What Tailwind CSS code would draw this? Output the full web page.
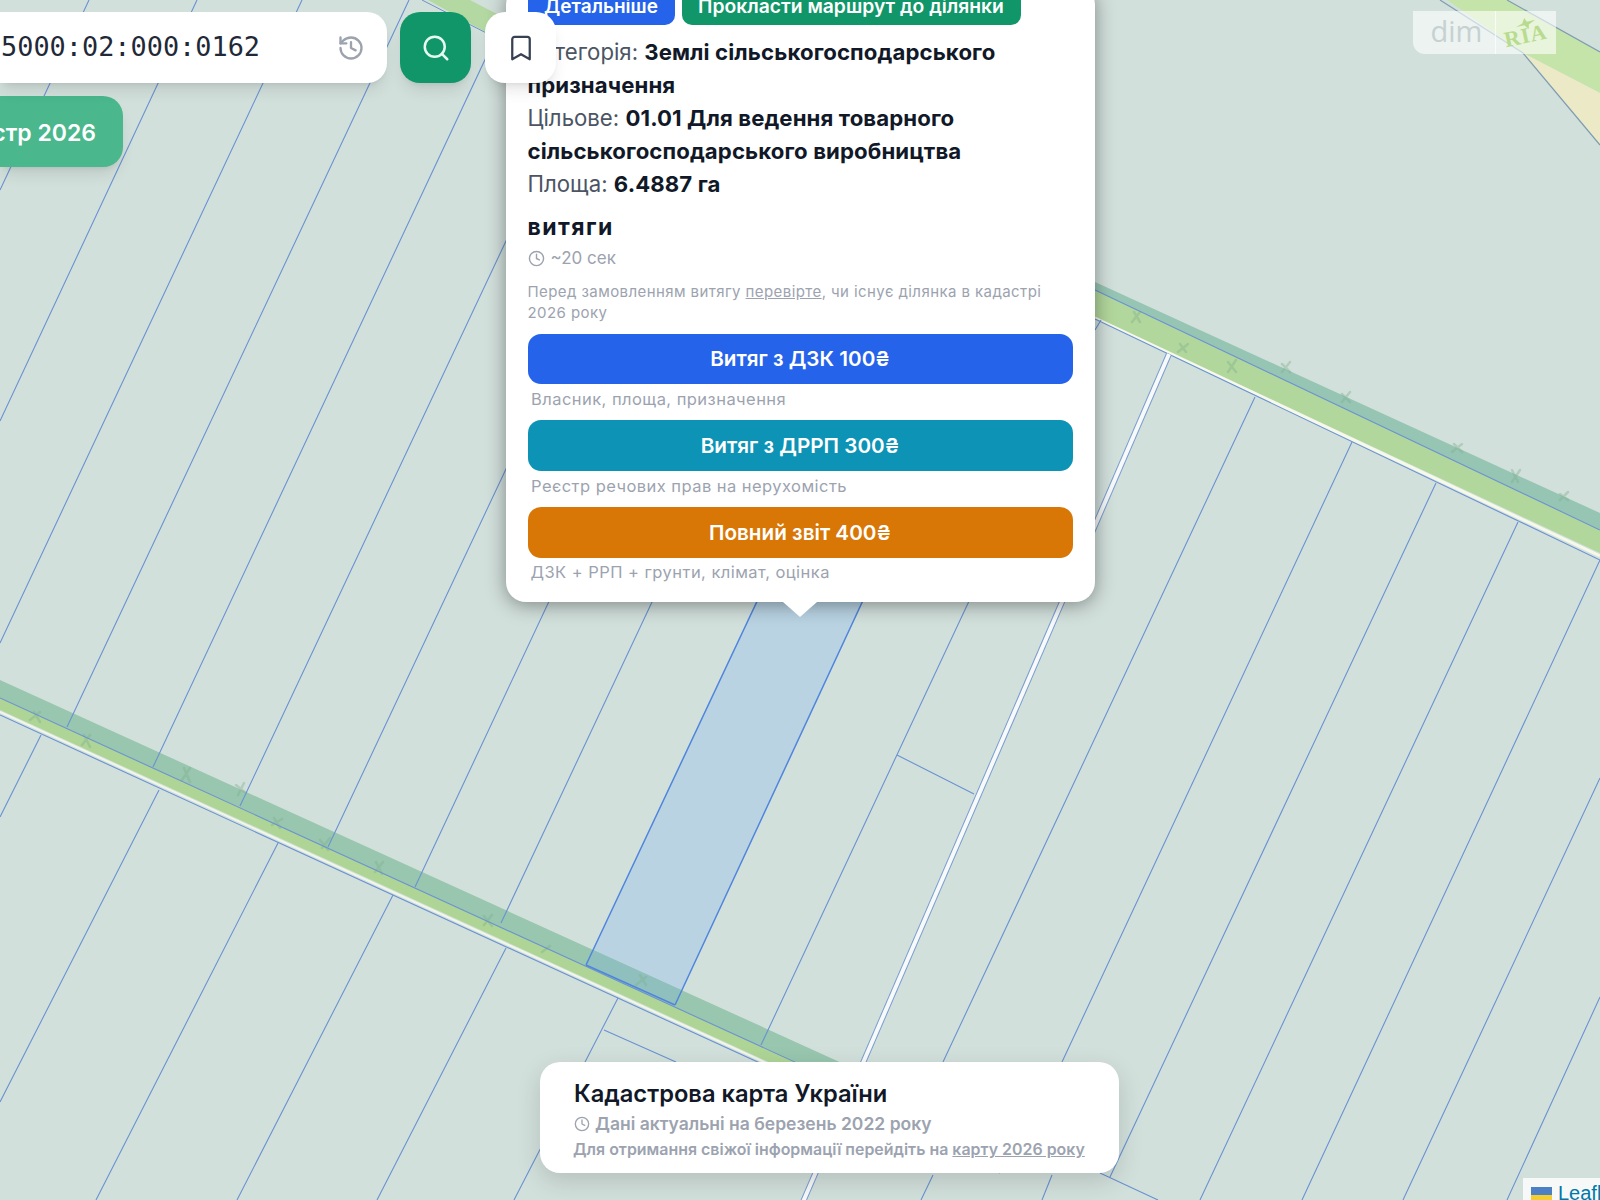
<!DOCTYPE html>
<html lang="uk">
<head>
    <meta charset="UTF-8">
    <meta name="viewport" content="width=device-width, initial-scale=1.0">
    <title>Кадастрова карта України</title>
    <script src="https://cdn.jsdelivr.net/npm/@tailwindcss/browser@4"></script>
</head>
<body class="m-0 font-['Inter',sans-serif]">
<div class="relative w-[1600px] h-[1200px] overflow-hidden bg-[#d2e0dc]">

    <!-- map -->
    <svg class="absolute inset-0" width="1600" height="1200" viewBox="0 0 1600 1200" fill="none">
        <!-- top right road -->
        <polygon points="1447,0 1507,0 1600,52 1600,93 1523,53" fill="#c5e4a9"/>
        <polygon points="1523,53 1600,93 1600,145 1580,120" fill="#ece9c6"/>
        <path d="M1440,0 L1523,53 L1600,145 M1507,0 L1600,52" stroke="#7f9db2" stroke-width="1.2"/>
        <!-- road near search -->
        <polygon points="428,0 470,0 520,26 500,40" fill="#b4d8a2"/>
        <path d="M422,0 L500,40" stroke="#6f93c4" stroke-width="1"/>

        <!-- selected parcel -->
        <polygon points="586,965 800,510 905,510 675,1005" fill="#b9d3e3"/>

        <!-- left road -->
        <polygon points="0,680 1000,1135 1000,1156 0,698" fill="#98c6ae"/>
        <polygon points="0,698 1000,1156 1000,1168 0,710" fill="#aed596"/>
        <polygon points="586,965 675,1005 681,990 593,950" fill="#8fc0bd"/>
        <path d="M0,712 L1000,1170" stroke="#f2f6e8" stroke-width="2"/>
        <!-- right road -->
        <polygon points="1095,282 1600,513 1600,530 1095,290" fill="#97c5b3"/>
        <polygon points="1095,290 1600,530 1600,553 1095,317" fill="#b2d79c"/>
        <path d="M1095,318 L1600,556" stroke="#f6f8ea" stroke-width="3"/>

        <!-- tree marks on the roads -->
        <g stroke="#7fb08f" stroke-width="2.5" stroke-linecap="round" opacity="0.4">
            <path d="M30,720 l10,-8 M34,712 l6,10 M82,745 l8,-10 M84,735 l6,12 M182,780 l8,-12 M184,768 l6,14 M238,795 l6,-12 M236,785 l10,8"/>
            <path d="M272,825 l10,-6 M274,818 l6,10 M322,848 l8,-10 M320,840 l8,10 M375,872 l8,-10 M376,862 l6,12 M484,925 l8,-10 M484,916 l8,10 M542,952 l8,-6 M640,975 l6,10 M636,985 l10,-8"/>
            <path d="M1132,322 l8,-10 M1134,312 l6,10 M1178,352 l10,-8 M1180,344 l6,8 M1228,372 l8,-12 M1228,362 l8,10 M1282,372 l8,-10 M1282,364 l8,8 M1342,402 l8,-10 M1342,394 l8,8 M1452,452 l10,-8 M1454,444 l8,8 M1512,482 l8,-12 M1512,470 l6,12 M1560,500 l8,-8 M1560,494 l8,6"/>
        </g>

        <!-- parcels above left road -->
        <g stroke="#6a92d2" stroke-width="1.1">
            <path d="M67,727 L409,0 M153,767 L513,0 M240,806 L530,190 M328,847 L530,418 M415,887 L620,450 M501,923 L700,500 M761,1045 L1000,535 M0,643 L302,0 M0,421 L197,0 M0,190 L89,0"/>
            <path d="M897,755 L974,794 M1095,330 L1101,320"/>
            <!-- road centre and lower edge -->
            <path d="M0,698 L1000,1156 M0,715 L1000,1173 M1095,290 L1600,530 M1095,319 L1600,560"/>
            <!-- parcels below left road -->
            <path d="M41,735 L0,817 M159,790 L0,1102 M278,843 L96,1200 M393,895 L237,1200 M506,948 L377,1200 M618,998 L514,1200 M604,1030 L676,1062"/>
            <!-- parcels below right road -->
            <path d="M1255,397 L943,1062 M1352,442 L1062,1062 M1436,483 L1110,1177 M1518,522 L1200,1200 M1600,560 L1302,1200 M1600,778 L1403,1200 M1600,997 L1507,1200 M1100,1173 L1158,1200"/>
            <path d="M933,1175 L921,1200 M1052,1175 L1042,1200"/>
        </g>
        <!-- double boundary -->
        <path d="M1169,354 L790,1232" stroke="#7a9cd2" stroke-width="6"/>
        <path d="M1169,354 L790,1232" stroke="#f7faf8" stroke-width="4"/>
        <!-- selected parcel outline -->
        <path d="M586,965 L800,510 M675,1005 L905,510 M586,965 L675,1005" stroke="#4f85dc" stroke-width="1.5"/>
    </svg>

    <!-- watermark -->
    <div class="absolute left-[1413px] top-[11px] w-[143px] h-[43px] flex bg-white/60 rounded-bl-[12px]">
        <div class="w-[83px] flex items-center justify-center pl-[5px] pb-[4px] border-r border-white/70 text-[29px] leading-none text-[#c6d1d1] font-['Open_Sans',sans-serif]">dim</div>
        <div class="relative flex-1 flex items-center justify-center pt-[6px]">
            <span class="font-['Liberation_Serif',serif] font-bold text-[22px] leading-none tracking-[1px] text-[#b7dc8e] -rotate-12">RIA</span>
            <svg class="absolute left-[19px] top-[6px]" width="22" height="13" viewBox="0 0 22 14"><path d="M0 11 L7 7 L9 1 L12 5 L21 3 L14 8 L14 13 L9 9 Z" fill="#b7dc8e"/></svg>
        </div>
    </div>

    <!-- parcel popup -->
    <div class="absolute left-[506px] bottom-[598px] w-[589px]">
        <div class="bg-white rounded-[20px] shadow-[0_3px_20px_rgba(0,0,0,0.4)] pl-[21.5px] pr-[22.5px] pb-[20px]">
            <div class="flex gap-[7px] h-[40px]">
                <button class="w-[147px] bg-[#2563eb] rounded-b-[10px] text-white text-[19px] font-semibold leading-none pt-[3px]">Детальніше</button>
                <button class="w-[339px] bg-[#109668] rounded-b-[10px] text-white text-[19.3px] font-semibold leading-none pt-[3px]">Прокласти маршрут до ділянки</button>
            </div>
            <div class="mt-[10px] text-[22.2px] leading-[33px] text-[#4b5563]">
                <p>Категорія: <b class="font-bold tracking-[0.1px] text-[#111827]">Землі сільськогосподарського призначення</b></p>
                <p>Цільове: <b class="font-bold tracking-[0.1px] text-[#111827]">01.01 Для ведення товарного сільськогосподарського виробництва</b></p>
                <p>Площа: <b class="font-bold tracking-[0.1px] text-[#111827]">6.4887 га</b></p>
            </div>
            <h3 class="mt-[13px] text-[23px] leading-[28px] font-bold tracking-[1.45px] text-[#111827]">витяги</h3>
            <div class="mt-[7px] flex items-center gap-[6px] text-[17px] leading-[20px] text-[#9ca3af]">
                <svg width="17" height="17" viewBox="0 0 24 24" fill="none" stroke="currentColor" stroke-width="2" stroke-linecap="round" stroke-linejoin="round"><circle cx="12" cy="12" r="10"/><polyline points="12 6 12 12 16 14"/></svg>
                <span>~20 сек</span>
            </div>
            <p class="mt-[13px] text-[15px] leading-[21px] tracking-[0.42px] text-[#9ca3af]">Перед замовленням витягу <span class="underline">перевірте</span>, чи існує ділянка в кадастрі 2026 року</p>
            <div class="mt-[10.5px] h-[50.5px] flex items-center justify-center rounded-[13px] bg-[#2563eb] text-white text-[20.7px] font-semibold">Витяг з ДЗК 100₴</div>
            <p class="mt-[5px] pl-[3.5px] text-[16.5px] leading-[20px] tracking-[0.45px] text-[#9ca3af]">Власник, площа, призначення</p>
            <div class="mt-[11px] h-[51px] flex items-center justify-center rounded-[13px] bg-[#0c93b5] text-white text-[20.7px] font-semibold">Витяг з ДРРП 300₴</div>
            <p class="mt-[5px] pl-[3.5px] text-[16.5px] leading-[20px] tracking-[0.45px] text-[#9ca3af]">Реєстр речових прав на нерухомість</p>
            <div class="mt-[11px] h-[51px] flex items-center justify-center rounded-[13px] bg-[#d97706] text-white text-[20.7px] font-semibold">Повний звіт 400₴</div>
            <p class="mt-[4px] pl-[3px] text-[16.5px] leading-[20px] tracking-[0.45px] text-[#9ca3af]">ДЗК + РРП + грунти, клімат, оцінка</p>
        </div>
        <div class="absolute left-[277px] top-full w-0 h-0 border-x-[17px] border-t-[15px] border-x-transparent border-t-white"></div>
    </div>

    <!-- search controls -->
    <div class="absolute left-0 top-[12px]">
        <div class="flex">
            <div class="w-[387px] h-[71px] bg-white rounded-r-[20px] shadow-lg flex items-center justify-between pl-[1px] pr-[22px]">
                <span class="font-['DejaVu_Sans_Mono',monospace] text-[26.9px] text-[#1f2937]">5000:02:000:0162</span>
                <svg width="28" height="28" viewBox="0 0 24 24" fill="none" stroke="#9ca3af" stroke-width="2" stroke-linecap="round" stroke-linejoin="round"><path d="M3 12a9 9 0 1 0 9-9 9.75 9.75 0 0 0-6.74 2.74L3 8"/><path d="M3 3v5h5"/><path d="M12 7v5l4 2"/></svg>
            </div>
            <div class="ml-[13px] w-[71px] h-[71px] bg-[#109668] rounded-[20px] shadow-lg flex items-center justify-center">
                <svg width="30" height="30" viewBox="0 0 24 24" fill="none" stroke="#e6faf1" stroke-width="2" stroke-linecap="round" stroke-linejoin="round"><circle cx="11" cy="11" r="8"/><path d="m21 21-4.3-4.3"/></svg>
            </div>
            <div class="ml-[14px] w-[71px] h-[71px] bg-white rounded-[20px] shadow-lg flex items-center justify-center">
                <svg width="30" height="30" viewBox="0 0 24 24" fill="none" stroke="#374151" stroke-width="1.8" stroke-linecap="round" stroke-linejoin="round"><path d="m19 21-7-4-7 4V5a2 2 0 0 1 2-2h10a2 2 0 0 1 2 2v16z"/></svg>
            </div>
        </div>
        <div class="mt-[13px] w-[123px] h-[71px] overflow-hidden bg-[#4ab78d] rounded-r-[20px] shadow-lg flex items-center justify-end pr-[27px] pt-[3px] whitespace-nowrap text-white text-[23px] font-semibold">
            <span class="shrink-0">Реєстр 2026</span>
        </div>
    </div>

    <!-- info card -->
    <div class="absolute left-[540px] top-[1062px] w-[579px] h-[111px] bg-white rounded-[20px] shadow-[0_8px_24px_rgba(0,0,0,0.15)] pl-[34px] pt-[17px]">
        <h2 class="text-[23.7px] leading-[30px] font-semibold text-[#111827]">Кадастрова карта України</h2>
        <div class="mt-[2px] flex items-center gap-[5px] text-[17.5px] leading-[26px] font-semibold text-[#9ca3af]">
            <svg width="16" height="16" viewBox="0 0 24 24" fill="none" stroke="currentColor" stroke-width="2" stroke-linecap="round" stroke-linejoin="round"><circle cx="12" cy="12" r="10"/><polyline points="12 6 12 12 16 14"/></svg>
            <span>Дані актуальні на березень 2022 року</span>
        </div>
        <p class="mt-[1px] -ml-[1px] text-[15.95px] leading-[24px] font-semibold text-[#9ca3af]">Для отримання свіжої інформації перейдіть на <span class="underline">карту 2026 року</span></p>
    </div>

    <!-- attribution -->
    <div class="absolute left-[1523px] top-[1178px] w-[77px] h-[22px] overflow-hidden bg-white/80 flex items-start pl-[8px] pt-[4px] gap-[6px] whitespace-nowrap font-['Liberation_Sans',sans-serif] text-[20px] leading-[22px] text-[#0078a8]">
        <span class="shrink-0 w-[21px] h-[16px] mt-[5px] bg-[linear-gradient(#4c7fc4_50%,#f4ce30_50%)]"></span>
        <span>Leaflet</span>
    </div>
</div>
</body>
</html>
